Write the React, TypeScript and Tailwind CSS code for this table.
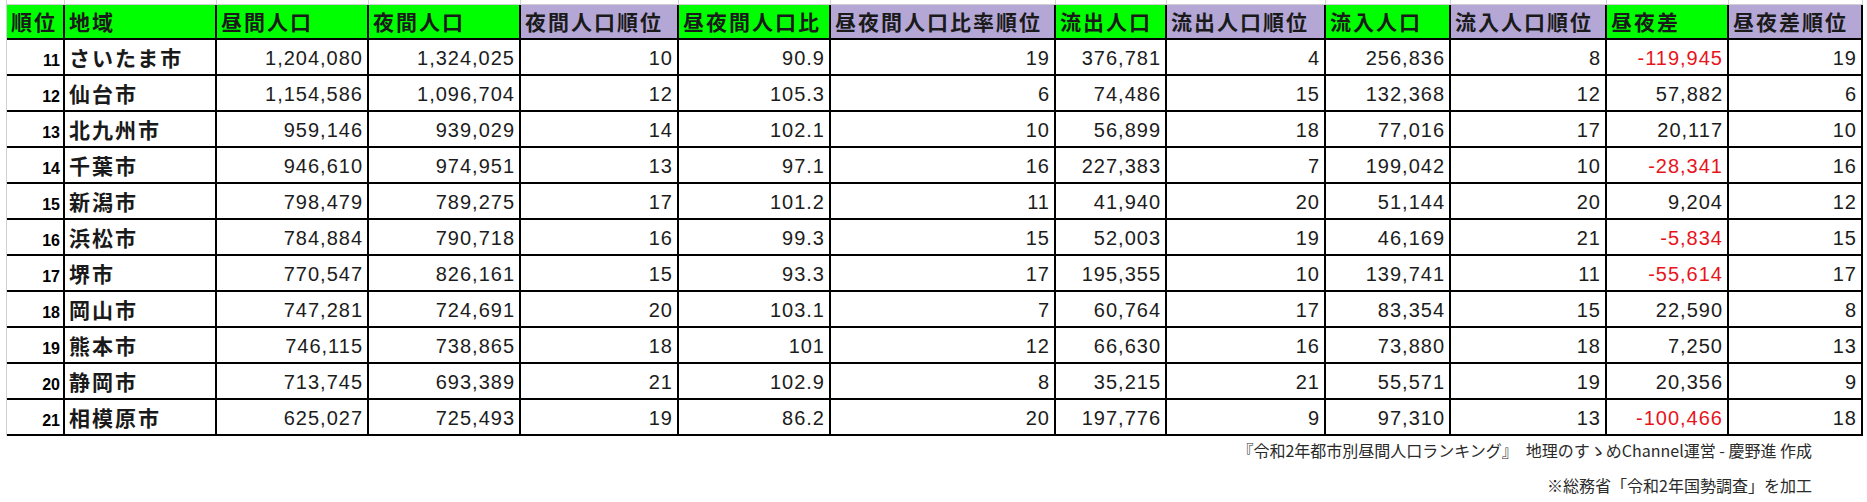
import React from "react";

type Row = {
  rank: number;
  city: string;
  day: string;
  night: string;
  nightRank: number;
  ratio: string;
  ratioRank: number;
  outflow: string;
  outRank: number;
  inflow: string;
  inRank: number;
  diff: string;
  diffRank: number;
};

const rows: Row[] = [
  { rank: 11, city: "さいたま市", day: "1,204,080", night: "1,324,025", nightRank: 10, ratio: "90.9", ratioRank: 19, outflow: "376,781", outRank: 4, inflow: "256,836", inRank: 8, diff: "-119,945", diffRank: 19 },
  { rank: 12, city: "仙台市", day: "1,154,586", night: "1,096,704", nightRank: 12, ratio: "105.3", ratioRank: 6, outflow: "74,486", outRank: 15, inflow: "132,368", inRank: 12, diff: "57,882", diffRank: 6 },
  { rank: 13, city: "北九州市", day: "959,146", night: "939,029", nightRank: 14, ratio: "102.1", ratioRank: 10, outflow: "56,899", outRank: 18, inflow: "77,016", inRank: 17, diff: "20,117", diffRank: 10 },
  { rank: 14, city: "千葉市", day: "946,610", night: "974,951", nightRank: 13, ratio: "97.1", ratioRank: 16, outflow: "227,383", outRank: 7, inflow: "199,042", inRank: 10, diff: "-28,341", diffRank: 16 },
  { rank: 15, city: "新潟市", day: "798,479", night: "789,275", nightRank: 17, ratio: "101.2", ratioRank: 11, outflow: "41,940", outRank: 20, inflow: "51,144", inRank: 20, diff: "9,204", diffRank: 12 },
  { rank: 16, city: "浜松市", day: "784,884", night: "790,718", nightRank: 16, ratio: "99.3", ratioRank: 15, outflow: "52,003", outRank: 19, inflow: "46,169", inRank: 21, diff: "-5,834", diffRank: 15 },
  { rank: 17, city: "堺市", day: "770,547", night: "826,161", nightRank: 15, ratio: "93.3", ratioRank: 17, outflow: "195,355", outRank: 10, inflow: "139,741", inRank: 11, diff: "-55,614", diffRank: 17 },
  { rank: 18, city: "岡山市", day: "747,281", night: "724,691", nightRank: 20, ratio: "103.1", ratioRank: 7, outflow: "60,764", outRank: 17, inflow: "83,354", inRank: 15, diff: "22,590", diffRank: 8 },
  { rank: 19, city: "熊本市", day: "746,115", night: "738,865", nightRank: 18, ratio: "101", ratioRank: 12, outflow: "66,630", outRank: 16, inflow: "73,880", inRank: 18, diff: "7,250", diffRank: 13 },
  { rank: 20, city: "静岡市", day: "713,745", night: "693,389", nightRank: 21, ratio: "102.9", ratioRank: 8, outflow: "35,215", outRank: 21, inflow: "55,571", inRank: 19, diff: "20,356", diffRank: 9 },
  { rank: 21, city: "相模原市", day: "625,027", night: "725,493", nightRank: 19, ratio: "86.2", ratioRank: 20, outflow: "197,776", outRank: 9, inflow: "97,310", inRank: 13, diff: "-100,466", diffRank: 18 },
];

// green = 値の列, purple = 順位の列
const headers: { label: string; purple?: boolean }[] = [
  { label: "順位" },
  { label: "地域" },
  { label: "昼間人口" },
  { label: "夜間人口" },
  { label: "夜間人口順位", purple: true },
  { label: "昼夜間人口比" },
  { label: "昼夜間人口比率順位", purple: true },
  { label: "流出人口" },
  { label: "流出人口順位", purple: true },
  { label: "流入人口" },
  { label: "流入人口順位", purple: true },
  { label: "昼夜差" },
  { label: "昼夜差順位", purple: true },
];

const gridCols =
  "grid grid-cols-[58px_152px_152px_152px_158px_152px_225px_111px_159px_125px_156px_122px_134px]";

function Num({ value, red }: { value: string | number; red?: boolean }) {
  return (
    <div
      className={`h-[36px] border-r-2 border-b-2 border-black pr-[4px] text-right text-[20px] leading-[36px] tracking-[1px] font-['Liberation_Sans',Arial,sans-serif] ${
        red ? "text-[#e8141c]" : "text-[#1c1c1c]"
      }`}
    >
      {value}
    </div>
  );
}

export default function App() {
  return (
    <div className="w-[1867px] h-[502px] bg-white overflow-hidden">
      <div className="ml-[6px] border-l border-[#d0d0d0]">
        {/* excel gridlines above the table */}
        <div className={gridCols}>
          {headers.map((h) => (
            <div key={h.label} className="h-[5px] border-r border-b border-[#d0d0d0]" />
          ))}
        </div>

        <div className={gridCols}>
          {headers.map((h) => (
            <div
              key={h.label}
              className={`h-[35px] border-r-2 border-b-2 border-black pl-[4px] text-[21px] leading-[33px] font-bold tracking-[2px] whitespace-nowrap overflow-hidden text-[#1a1a1a] font-['Noto_Sans_CJK_JP',sans-serif] ${
                h.purple ? "bg-[#b4a7d6]" : "bg-[#00ff00]"
              }`}
            >
              {h.label}
            </div>
          ))}

          {rows.map((r) => (
            <React.Fragment key={r.rank}>
              <div className="h-[36px] border-r-2 border-b-2 border-black pr-[3px] text-right text-[20px] leading-[38px] font-['Liberation_Sans',Arial,sans-serif]">
                <span className="text-[16px] font-bold text-black">{r.rank}</span>
              </div>
              <div className="h-[36px] border-r-2 border-b-2 border-black pl-[4px] text-[21px] leading-[34px] font-bold tracking-[2px] whitespace-nowrap text-[#1a1a1a] font-['Noto_Sans_CJK_JP',sans-serif]">
                {r.city}
              </div>
              <Num value={r.day} />
              <Num value={r.night} />
              <Num value={r.nightRank} />
              <Num value={r.ratio} />
              <Num value={r.ratioRank} />
              <Num value={r.outflow} />
              <Num value={r.outRank} />
              <Num value={r.inflow} />
              <Num value={r.inRank} />
              <Num value={r.diff} red={r.diff.startsWith("-")} />
              <Num value={r.diffRank} />
            </React.Fragment>
          ))}
        </div>
      </div>

      <div className="pr-[55px] text-right text-[16px] text-[#2a2a2a] font-['Noto_Sans_CJK_JP',sans-serif]">
        <p className="mt-[2px] leading-[24px]">
          『令和2年都市別昼間人口ランキング』　地理のすゝめChannel運営 - 慶野進 作成
        </p>
        <p className="mt-[11px] leading-[24px]">※総務省「令和2年国勢調査」を加工</p>
      </div>
    </div>
  );
}
